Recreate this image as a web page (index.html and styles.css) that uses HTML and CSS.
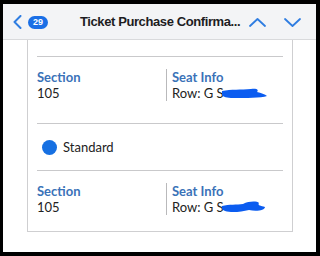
FILE: index.html
```html
<!DOCTYPE html>
<html>
<head>
<meta charset="utf-8">
<link rel="stylesheet" href="styles.css">
</head>
<body>
<div class="frame">
  <header class="bar">
    <svg class="back" width="9" height="14" viewBox="0 0 9 14"><path d="M7.5 1 L1.5 7 L7.5 13" fill="none" stroke="#2f7de1" stroke-width="2" stroke-linecap="round" stroke-linejoin="round"/></svg>
    <span class="badge">29</span>
    <span class="title">Ticket Purchase Confirma...</span>
    <svg class="nav up" width="17" height="9" viewBox="0 0 17 9"><path d="M1 8 L8.5 1 L16 8" fill="none" stroke="#2f7de1" stroke-width="1.8" stroke-linecap="round" stroke-linejoin="round"/></svg>
    <svg class="nav down" width="17" height="9" viewBox="0 0 17 9"><path d="M1 1 L8.5 8 L16 1" fill="none" stroke="#2f7de1" stroke-width="1.8" stroke-linecap="round" stroke-linejoin="round"/></svg>
  </header>
  <main class="content">
    <section class="card">
      <div class="top-gap"></div>
      <div class="sep"></div>
      <div class="info first">
        <div class="col">
          <div class="label">Section</div>
          <div class="value">105</div>
        </div>
        <div class="col right">
          <div class="label">Seat Info</div>
          <div class="value">Row: G S<svg class="scribble" width="48" height="13" viewBox="0 0 48 13"><path d="M1 4 C10 2 20 3 30 2 C36 1 38 3 36 5 C40 6 44 7 46 9 C40 11 25 11 12 11 C6 11 2 10 1 8 Z" fill="#0b5cf0"/></svg></div>
        </div>
      </div>
      <div class="sep"></div>
      <div class="type">
        <span class="dot"></span>
        <span class="type-name">Standard</span>
      </div>
      <div class="sep"></div>
      <div class="info last">
        <div class="col">
          <div class="label">Section</div>
          <div class="value">105</div>
        </div>
        <div class="col right">
          <div class="label">Seat Info</div>
          <div class="value">Row: G S<svg class="scribble" width="46" height="14" viewBox="0 0 46 14"><path d="M1 6 C8 4 16 5 22 4 C28 1 36 1 38 3 C36 5 40 6 44 7 C44 10 36 12 28 10 C20 12 10 13 4 11 C1 10 0 8 1 6 Z" fill="#0b5cf0"/></svg></div>
        </div>
      </div>
    </section>
  </main>
</div>
</body>
</html>
```
FILE: styles.css
```css
html, body {
  margin: 0;
  padding: 0;
  background: #000;
  width: 320px;
  height: 256px;
  overflow: hidden;
}

.frame {
  margin: 4px 4px 4px 3px;
  height: 248px;
  background: #fff;
  overflow: hidden;
  display: flex;
  flex-direction: column;
}

.bar {
  height: 35px;
  flex: none;
  background: #f3f4f6;
  border-bottom: 1px solid #d9dadc;
  display: flex;
  align-items: center;
  padding-left: 10px;
  font-family: "Liberation Sans", Arial, sans-serif;
}

.back {
  display: block;
  margin-top: 1px;
  flex: none;
}

.badge {
  flex: none;
  margin-left: 6px;
  width: 20px;
  height: 13px;
  border-radius: 7px;
  background: #1a6fe6;
  color: #fff;
  font-size: 9px;
  font-weight: bold;
  line-height: 13px;
  text-align: center;
  margin-top: 1px;
}

.title {
  flex: none;
  margin-left: 32px;
  font-size: 13px;
  font-weight: bold;
  letter-spacing: -0.4px;
  color: #1d1d1f;
  white-space: nowrap;
  width: 166px;
}

.nav {
  display: block;
  margin-top: 1px;
  flex: none;
}

.up {
  margin-left: 3px;
}

.down {
  margin-left: 18px;
}

.content {
  flex: 1;
  padding-left: 24px;
}

.card {
  border: 1px solid #cfcfd1;
  border-top: none;
  padding: 0 9px 16px;
  box-sizing: border-box;
  width: 266px;
  font-family: Lato, "Open Sans", sans-serif;
}

.top-gap {
  height: 16px;
}

.sep {
  height: 1px;
  background: #c9c9cb;
}

.info {
  display: grid;
  grid-template-columns: 129px 1fr;
}

.info.first {
  padding: 12px 0 22px;
}

.info.last {
  padding: 12px 0 0;
}

.col.right {
  border-left: 1.5px solid #b9b9bb;
  padding-left: 5px;
}

.label {
  font-size: 13px;
  line-height: 16px;
  font-weight: bold;
  color: #3a72b8;
}

.value {
  font-size: 13px;
  line-height: 16px;
  color: #222;
  display: flex;
  align-items: center;
  white-space: nowrap;
}

.scribble {
  display: block;
  margin-left: -3px;
}

.type {
  display: flex;
  align-items: center;
  height: 46px;
  padding-left: 5px;
}

.dot {
  width: 15px;
  height: 15px;
  border-radius: 50%;
  background: #1670e2;
}

.type-name {
  margin-left: 6px;
  font-size: 13px;
  color: #222;
}
```
